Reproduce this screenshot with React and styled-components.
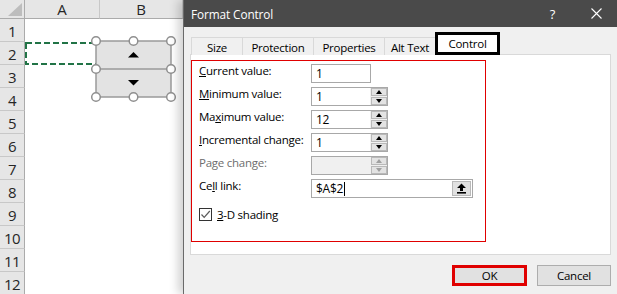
import React from "react";
import styled, { createGlobalStyle } from "styled-components";

const GlobalStyle = createGlobalStyle`
  html, body { margin: 0; padding: 0; background: #fff; }
  body { font-family: "Segoe UI", "Open Sans", "Noto Sans", sans-serif; }
`;

const ROWS = [1, 2, 3, 4, 5, 6, 7, 8, 9, 10, 11, 12];

const FIELDS = [
  { label: "Current value:", key: "C", value: "1", kind: "plain" },
  { label: "Minimum value:", key: "M", value: "1", kind: "spin" },
  { label: "Maximum value:", key: "x", value: "12", kind: "spin" },
  { label: "Incremental change:", key: "I", value: "1", kind: "spin" },
  { label: "Page change:", key: null, value: "", kind: "spin", disabled: true },
  { label: "Cell link:", key: "l", value: "$A$2", kind: "ref" },
];

function App() {
  return (
    <>
      <GlobalStyle />
      <Frame>
        <Sheet>
          <Corner>
            <svg width="25" height="19" viewBox="0 0 25 19">
              <polygon points="8,16 22,16 22,3" fill="#bdbdbd" />
            </svg>
          </Corner>
          <ColHead>A</ColHead>
          <ColHead>B</ColHead>
          {ROWS.map((n) => (
            <React.Fragment key={n}>
              <RowHead>{n}</RowHead>
              <Cell />
            </React.Fragment>
          ))}
          <Drawing width="183" height="294" viewBox="0 0 183 294">
            <rect x="26" y="43" width="72" height="21" fill="none" stroke="#217346" strokeWidth="2" strokeDasharray="6 3" />
            <rect x="96" y="41" width="75" height="56" fill="#e3e3e3" stroke="#9a9a9a" strokeWidth="1.5" />
            <line x1="96" y1="69" x2="171" y2="69" stroke="#9a9a9a" strokeWidth="1.5" />
            <polygon points="128,57.5 139,57.5 133.5,52" fill="#000" />
            <polygon points="128,80 139,80 133.5,85.5" fill="#000" />
            {[[96, 41], [133.5, 41], [171, 41], [96, 69], [171, 69], [96, 97], [133.5, 97], [171, 97]].map(([cx, cy], i) => (
              <circle key={i} cx={cx} cy={cy} r="4.3" fill="#fff" stroke="#8f8f8f" strokeWidth="1.5" />
            ))}
          </Drawing>
        </Sheet>

        <Dialog>
          <TitleBar>
            <Title>Format Control</Title>
            <TitleButton $w={45}>?</TitleButton>
            <TitleButton $w={42}>
              <svg width="11" height="11" viewBox="0 0 11 11">
                <path d="M0.5 0.5 L10.5 10.5 M10.5 0.5 L0.5 10.5" stroke="#fff" strokeWidth="1.1" />
              </svg>
            </TitleButton>
          </TitleBar>

          <Body>
            <Tabs>
              <Tab $w={51}>Size</Tab>
              <Tab $w={71}>Protection</Tab>
              <Tab $w={71}>Properties</Tab>
              <Tab $w={51}>Alt Text</Tab>
              <Tab $w={65} $active>Control</Tab>
            </Tabs>

            <Panel>
              <Highlight>
                <Form>
                  {FIELDS.map((f) => (
                    <React.Fragment key={f.label}>
                      <Label $disabled={f.disabled}>
                        {f.key ? renderKey(f.label, f.key) : f.label}
                      </Label>
                      {f.kind === "plain" && (
                        <Field $w={60}>
                          <Value>{f.value}</Value>
                        </Field>
                      )}
                      {f.kind === "spin" && (
                        <Field $w={77} $disabled={f.disabled}>
                          <Value>{f.value}</Value>
                          <Spinner>
                            <SpinBtn>
                              <Arrow $dir="up" $disabled={f.disabled} />
                            </SpinBtn>
                            <SpinBtn>
                              <Arrow $dir="down" $disabled={f.disabled} />
                            </SpinBtn>
                          </Spinner>
                        </Field>
                      )}
                      {f.kind === "ref" && (
                        <Field $w={162}>
                          <Value>
                            {f.value}
                            <Caret />
                          </Value>
                          <RefBtn>
                            <svg width="11" height="11" viewBox="0 0 11 11">
                              <polygon points="5.5,0.5 10,5 7,5 7,8 4,8 4,5 1,5" fill="#000" />
                              <rect x="1" y="9" width="9" height="1.6" fill="#000" />
                            </svg>
                          </RefBtn>
                        </Field>
                      )}
                    </React.Fragment>
                  ))}
                </Form>
                <CheckRow>
                  <CheckBox>
                    <svg width="11" height="11" viewBox="0 0 11 11">
                      <path d="M1.5 5.5 L4.2 8.4 L9.8 2" fill="none" stroke="#5a5a5a" strokeWidth="1.2" />
                    </svg>
                  </CheckBox>
                  <span>{renderKey("3-D shading", "3")}</span>
                </CheckRow>
              </Highlight>
            </Panel>

            <Footer>
              <Button $ok>OK</Button>
              <Button>Cancel</Button>
            </Footer>
          </Body>
        </Dialog>
      </Frame>
    </>
  );
}

function renderKey(text, key) {
  const i = text.indexOf(key);
  return (
    <>
      {text.slice(0, i)}
      <u>{key}</u>
      {text.slice(i + 1)}
    </>
  );
}

const Frame = styled.div`
  display: flex;
  width: 617px;
  height: 294px;
  overflow: hidden;
  background: #fff;
`;

const Sheet = styled.div`
  position: relative;
  flex: none;
  width: 183px;
  display: grid;
  grid-template-columns: 25px 75px 1fr;
  grid-template-rows: 19px repeat(12, 23px);
  align-content: start;
  font-size: 15px;
  color: #262626;
`;

const Corner = styled.div`
  background: #e6e6e6;
  border-right: 1px solid #ababab;
  border-bottom: 1px solid #ababab;
  box-sizing: border-box;
  svg { display: block; }
`;

const ColHead = styled.div`
  display: flex;
  align-items: center;
  justify-content: center;
  background: #e6e6e6;
  border-right: 1px solid #c8c8c8;
  border-bottom: 1px solid #ababab;
  box-sizing: border-box;
  line-height: 1;
`;

const RowHead = styled.div`
  display: flex;
  align-items: center;
  justify-content: center;
  background: #e6e6e6;
  border-right: 1px solid #ababab;
  border-bottom: 1px solid #c8c8c8;
  box-sizing: border-box;
  line-height: 1;
  letter-spacing: -0.5px;
  padding-top: 3px;
`;

const Cell = styled.div`
  grid-column: 2 / 4;
  background: #fff;
`;

const Drawing = styled.svg`
  position: absolute;
  left: 0;
  top: 0;
  pointer-events: none;
`;

const Dialog = styled.div`
  flex: 1;
  display: flex;
  flex-direction: column;
  background: #f0f0f0;
  border-left: 1px solid #6a6a6a;
  box-shadow: -5px 0 9px rgba(0, 0, 0, 0.18);
  font-size: 11.5px;
  letter-spacing: -0.25px;
  color: #000;
  position: relative;
  z-index: 1;
`;

const TitleBar = styled.div`
  height: 27px;
  flex: none;
  display: flex;
  align-items: center;
  background: #4a4a4a;
  color: #fff;
  padding-left: 7px;
`;

const Title = styled.div`
  flex: 1;
  font-size: 11.8px;
  letter-spacing: -0.1px;
`;

const TitleButton = styled.div`
  width: ${(p) => p.$w}px;
  display: flex;
  align-items: center;
  justify-content: center;
  font-size: 13px;
`;

const Body = styled.div`
  flex: 1;
  display: flex;
  flex-direction: column;
  padding: 5px 6px 0 6px;
`;

const Tabs = styled.div`
  display: flex;
  align-items: flex-end;
  height: 23px;
  padding-left: 1px;
`;

const Tab = styled.div`
  box-sizing: border-box;
  width: ${(p) => p.$w}px;
  height: ${(p) => (p.$active ? 23 : 18)}px;
  display: flex;
  align-items: center;
  justify-content: center;
  background: ${(p) => (p.$active ? "#fff" : "#f0f0f0")};
  border: ${(p) => (p.$active ? "3px solid #000" : "1px solid #d9d9d9")};
  border-bottom: ${(p) => (p.$active ? "3px solid #000" : "none")};
  border-right: ${(p) => (p.$active ? "3px solid #000" : "none")};
  padding-top: ${(p) => (p.$active ? 0 : 1)}px;
  position: relative;
  z-index: ${(p) => (p.$active ? 2 : 0)};
`;

const Panel = styled.div`
  box-sizing: border-box;
  height: 201px;
  background: #fff;
  border: 1px solid #d9d9d9;
  margin-top: -1px;
  padding: 5px 0 0 0;
`;

const Highlight = styled.div`
  box-sizing: border-box;
  width: 295px;
  height: 182px;
  border: 1px solid #e00000;
  padding: 3px 0 0 7px;
`;

const Form = styled.div`
  display: grid;
  grid-template-columns: 112px auto;
  grid-auto-rows: 19px;
  row-gap: 4px;
  justify-items: start;
`;

const Label = styled.div`
  line-height: 14px;
  white-space: nowrap;
  color: ${(p) => (p.$disabled ? "#6d6d6d" : "#000")};
`;

const Field = styled.div`
  box-sizing: border-box;
  width: ${(p) => p.$w}px;
  height: 19px;
  display: flex;
  border: 1px solid #a8a8a8;
  background: ${(p) => (p.$disabled ? "#f0f0f0" : "#fff")};
`;

const Value = styled.div`
  flex: 1;
  display: flex;
  align-items: center;
  padding-left: 4px;
  font-size: 12px;
  color: #000;
`;

const Caret = styled.span`
  display: inline-block;
  width: 1px;
  height: 14px;
  background: #000;
  margin-left: 1px;
`;

const Spinner = styled.div`
  width: 16px;
  display: flex;
  flex-direction: column;
  gap: 1px;
  padding: 0 0 0 1px;
  background: #f0f0f0;
`;

const SpinBtn = styled.div`
  flex: 1;
  display: flex;
  align-items: center;
  justify-content: center;
  background: #e3e3e3;
  border: 1px solid #b9b9b9;
`;

const Arrow = styled.span`
  width: 0;
  height: 0;
  border-left: 3.5px solid transparent;
  border-right: 3.5px solid transparent;
  ${(p) => (p.$dir === "up" ? "border-bottom" : "border-top")}: 4px solid
    ${(p) => (p.$disabled ? "#a0a0a0" : "#000")};
`;

const RefBtn = styled.div`
  width: 19px;
  margin: 1px;
  display: flex;
  align-items: center;
  justify-content: center;
  background: #e1e1e1;
  border: 1px solid #b9b9b9;
  box-sizing: border-box;
`;

const CheckRow = styled.div`
  display: flex;
  align-items: center;
  gap: 5px;
  margin-top: 9px;
`;

const CheckBox = styled.div`
  box-sizing: border-box;
  width: 13px;
  height: 13px;
  border: 1px solid #333;
  background: #fff;
  display: flex;
  align-items: center;
  justify-content: center;
`;

const Footer = styled.div`
  display: flex;
  justify-content: flex-end;
  gap: 10px;
  padding-top: 10px;
`;

const Button = styled.div`
  box-sizing: border-box;
  width: ${(p) => (p.$ok ? 75 : 74)}px;
  height: 21px;
  display: flex;
  align-items: center;
  justify-content: center;
  background: #e1e1e1;
  border: ${(p) => (p.$ok ? "3px solid #e00000" : "1px solid #adadad")};
`;

export default App;
